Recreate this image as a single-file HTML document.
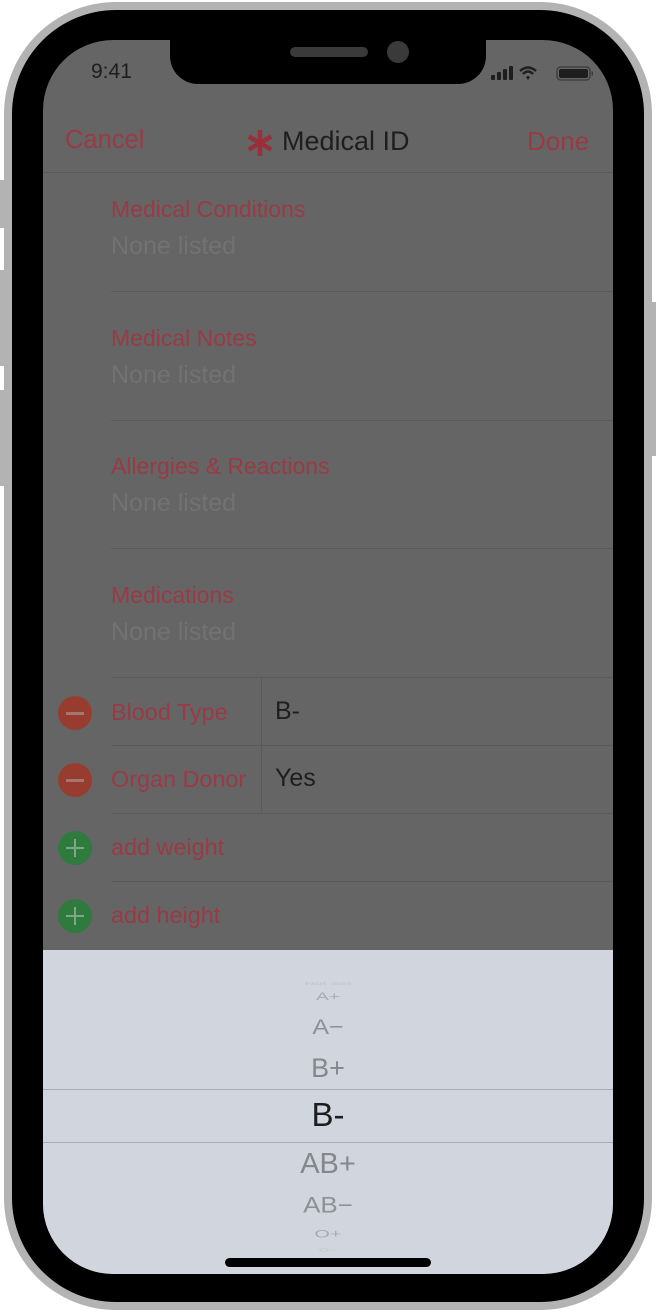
<!DOCTYPE html>
<html><head><meta charset="utf-8"><style>
*{margin:0;padding:0;box-sizing:border-box}
body{width:656px;height:1314px;background:#fff;position:relative;overflow:hidden;font-family:"Liberation Sans",sans-serif}
.frame{position:absolute;left:4px;top:2px;width:648px;height:1308px;border-radius:112px;background:#b3b3b3}
.black{position:absolute;left:12px;top:10px;width:632px;height:1292px;border-radius:104px;background:#000}
.screen{position:absolute;left:43px;top:40px;width:570px;height:1234px;border-radius:70px;background:#656565;overflow:hidden}
.btn{position:absolute;background:#b3b3b3}
.notch{position:absolute;left:170px;top:40px;width:316px;height:44px;background:#000;border-radius:0 0 28px 28px}
.t{position:absolute;white-space:nowrap}
.red{color:#9a3a45}
.gray{color:#727272}
.sep{position:absolute;height:1px;background:#5a5a5a}
.circ{position:absolute;left:58px;width:34px;height:34px;border-radius:50%}
.pick{position:absolute;left:0;top:910px;width:570px;height:324px;background:#d1d5dd}
.pt{position:absolute;width:570px;text-align:center;left:0;white-space:nowrap;height:40px;line-height:40px}
</style></head><body>
<div class="btn" style="left:0;top:180px;width:6px;height:48px"></div>
<div class="btn" style="left:0;top:270px;width:6px;height:96px"></div>
<div class="btn" style="left:0;top:390px;width:6px;height:96px"></div>
<div class="btn" style="left:650px;top:302px;width:6px;height:154px"></div>
<div class="frame"></div>
<div class="black"></div>
<div class="screen">
 <div class="t" style="left:48px;top:20px;font-size:21px;color:#1e1e1e">9:41</div>
 <svg style="position:absolute;left:448px;top:24px" width="120" height="20" viewBox="0 0 120 20">
  <rect x="0" y="11" width="4" height="5" rx="1" fill="#1e1e1e"/><rect x="6" y="8" width="4" height="8" rx="1" fill="#1e1e1e"/><rect x="12" y="5" width="4" height="11" rx="1" fill="#1e1e1e"/><rect x="18" y="2" width="4" height="14" rx="1" fill="#1e1e1e"/>
  <path d="M29 7 Q37 0 45 7 M32 10 Q37 5 42 10" stroke="#1e1e1e" stroke-width="2.4" fill="none"/><path d="M35 13 L37 16 L39 13 Q37 11 35 13Z" fill="#1e1e1e"/>
  <rect x="66" y="3" width="33" height="13" rx="3.5" fill="none" stroke="#3a3a3a" stroke-width="1.3"/><rect x="68" y="5" width="29" height="9" rx="2" fill="#1e1e1e"/><rect x="100.5" y="7.5" width="1.5" height="4" fill="#3a3a3a"/>
 </svg>
 <div class="t red" style="left:22px;top:86px;font-size:25.5px">Cancel</div>
 <div class="t red" style="left:484px;top:86px;font-size:26px">Done</div>
 <svg style="position:absolute;left:202px;top:88px" width="30" height="30" viewBox="0 0 30 30"><g stroke="#9a2f3c" stroke-width="4.5"><line x1="15" y1="2" x2="15" y2="28"/><line x1="3.7" y1="8.5" x2="26.3" y2="21.5"/><line x1="3.7" y1="21.5" x2="26.3" y2="8.5"/></g></svg>
 <div class="t" style="left:239px;top:86px;font-size:27px;color:#1e1e1e">Medical ID</div>
 <div class="sep" style="left:0;top:132px;width:570px"></div>

 <div class="t red" style="left:68px;top:156px;font-size:23px">Medical Conditions</div>
 <div class="t gray" style="left:68px;top:192px;font-size:25px">None listed</div>
 <div class="sep" style="left:68px;top:251px;width:502px"></div>
 <div class="t red" style="left:68px;top:285px;font-size:23px">Medical Notes</div>
 <div class="t gray" style="left:68px;top:321px;font-size:25px">None listed</div>
 <div class="sep" style="left:68px;top:380px;width:502px"></div>
 <div class="t red" style="left:68px;top:413px;font-size:23px">Allergies &amp; Reactions</div>
 <div class="t gray" style="left:68px;top:449px;font-size:25px">None listed</div>
 <div class="sep" style="left:68px;top:508px;width:502px"></div>
 <div class="t red" style="left:68px;top:542px;font-size:23px">Medications</div>
 <div class="t gray" style="left:68px;top:578px;font-size:25px">None listed</div>
 <div class="sep" style="left:68px;top:637px;width:502px"></div>

 <div class="circ" style="left:15px;top:656px;background:#993c30"></div><div style="position:absolute;left:23px;top:672px;width:18px;height:2.5px;background:#a3776f"></div>
 <div class="t red" style="left:68px;top:659px;font-size:23.4px">Blood Type</div>
 <div class="t" style="left:232px;top:657px;font-size:25px;color:#1e1e1e">B-</div>
 <div class="sep" style="left:68px;top:705px;width:502px"></div>
 <div class="circ" style="left:15px;top:723px;background:#993c30"></div><div style="position:absolute;left:23px;top:739px;width:18px;height:2.5px;background:#a3776f"></div>
 <div class="t red" style="left:68px;top:726px;font-size:23.4px">Organ Donor</div>
 <div class="t" style="left:232px;top:724px;font-size:25px;color:#1e1e1e">Yes</div>
 <div class="sep" style="left:68px;top:773px;width:502px"></div>
 <div class="sep" style="left:218px;top:637px;width:1px;height:136px"></div>
 <div class="circ" style="left:15px;top:791px;background:#2f7a3d"></div><div style="position:absolute;left:23px;top:807px;width:18px;height:2px;background:#80a688"></div><div style="position:absolute;left:31px;top:799px;width:2px;height:18px;background:#80a688"></div>
 <div class="t red" style="left:68px;top:794px;font-size:23.4px">add weight</div>
 <div class="sep" style="left:68px;top:841px;width:502px"></div>
 <div class="circ" style="left:15px;top:859px;background:#2f7a3d"></div><div style="position:absolute;left:23px;top:875px;width:18px;height:2px;background:#80a688"></div><div style="position:absolute;left:31px;top:867px;width:2px;height:18px;background:#80a688"></div>
 <div class="t red" style="left:68px;top:862px;font-size:23.4px">add height</div>

 <div class="pick">
  <div class="pt" style="top:13px;font-size:14px;color:#c2c4c9;transform:scaleY(.35)">Not Set</div>
  <div class="pt" style="top:27px;font-size:19px;color:#a9abb0;transform:scaleY(.6)">A+</div>
  <div class="pt" style="top:57px;font-size:25px;color:#8e9095;transform:scaleY(.85)">A−</div>
  <div class="pt" style="top:98px;font-size:27px;color:#85878c">B+</div>
  <div style="position:absolute;left:0;top:139px;width:570px;height:1px;background:#a9adb4"></div>
  <div class="pt" style="top:145px;font-size:33px;color:#1e1e1e">B-</div>
  <div style="position:absolute;left:0;top:192px;width:570px;height:1px;background:#a9adb4"></div>
  <div class="pt" style="top:194px;font-size:29px;color:#85878c">AB+</div>
  <div class="pt" style="top:235px;font-size:26px;color:#8e9095;transform:scaleY(.85)">AB−</div>
  <div class="pt" style="top:264px;font-size:20px;color:#a9abb0;transform:scaleY(.55)">O+</div>
  <div class="pt" style="top:280px;font-size:14px;color:#c2c4c9;transform:scaleY(.3)">O−</div>
 </div>
 <div style="position:absolute;left:182px;top:1218px;width:206px;height:9px;border-radius:5px;background:#000"></div>
</div>
<div class="notch"></div>
<div style="position:absolute;left:290px;top:47px;width:78px;height:10px;border-radius:5px;background:#3a3a3a"></div>
<div style="position:absolute;left:387px;top:41px;width:22px;height:22px;border-radius:50%;background:#3a3a3a"></div>
</body></html>
